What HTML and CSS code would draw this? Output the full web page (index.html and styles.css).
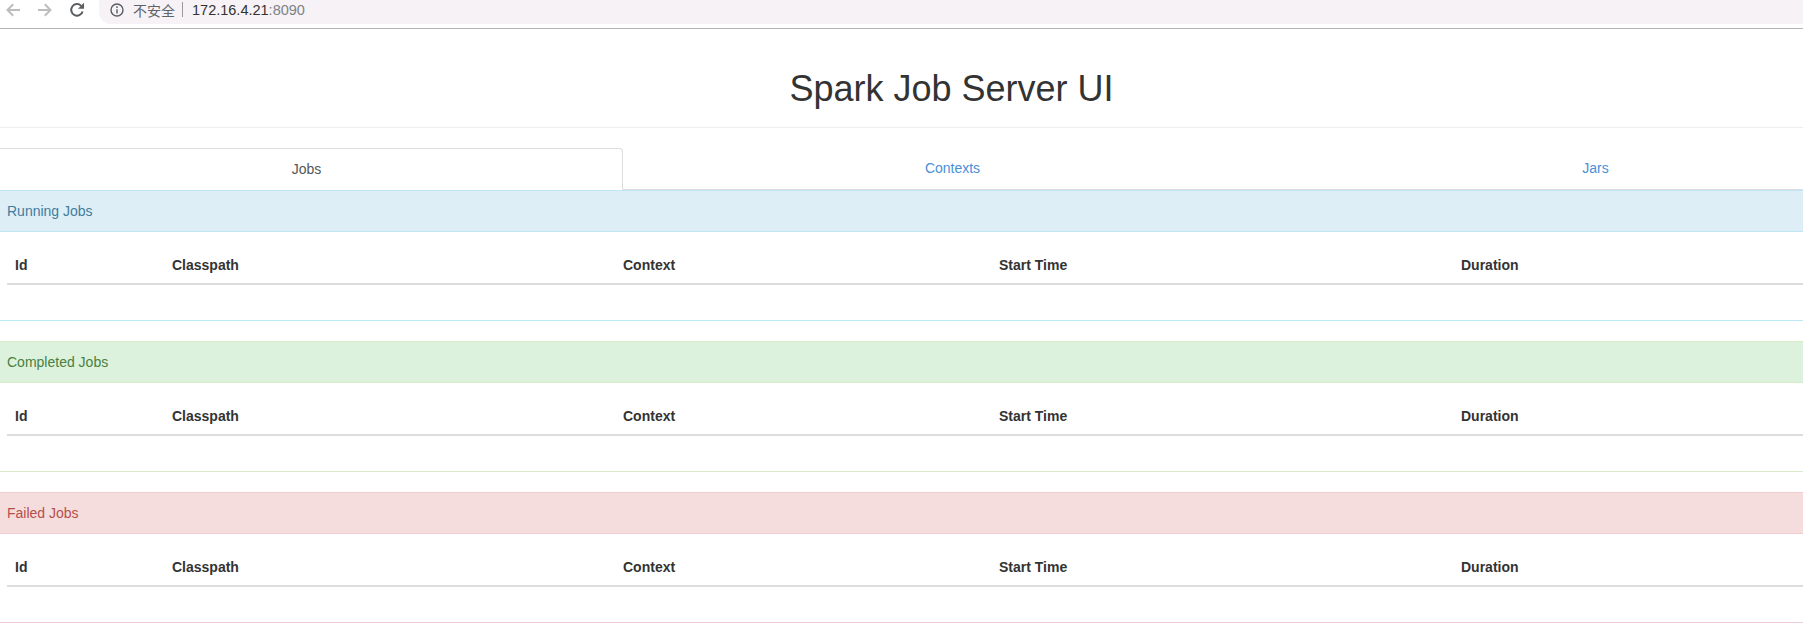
FILE: index.html
```html
<!DOCTYPE html>
<html lang="zh">
<head>
<meta charset="utf-8">
<title>Spark Job Server UI</title>
<link rel="stylesheet" href="styles.css">
</head>
<body>
<div class="toolbar">
  <div class="nav-icons">
    <svg class="icon back" viewBox="0 0 16 16"><path d="M15 8H2.5M8.2 2.3L2.5 8L8.2 13.7"/></svg>
    <svg class="icon forward" viewBox="0 0 16 16"><path d="M1 8H13.5M7.8 2.3L13.5 8L7.8 13.7"/></svg>
    <svg class="icon reload" viewBox="0 0 16 16"><path d="M13.6 9.4A5.8 5.8 0 1 1 12.2 3.9"/><path class="fill" d="M9 6.8H15V0.8Z"/></svg>
  </div>
  <div class="omnibox">
    <svg class="info" viewBox="0 0 14 14"><circle cx="7" cy="7" r="6"/><path d="M7 6.2V10.6M7 3.2V5"/></svg>
    <span class="insecure">不安全</span>
    <span class="sep"></span>
    <span class="host">172.16.4.21</span><span class="port">:8090</span>
  </div>
</div>
<div class="page">
  <h1 class="title">Spark Job Server UI</h1>
  <ul class="tabs">
    <li class="tab active">Jobs</li>
    <li class="tab">Contexts</li>
    <li class="tab">Jars</li>
  </ul>
  <section class="panel info-panel">
    <div class="panel-heading">Running Jobs</div>
    <div class="panel-body"><div class="row"><span>Id</span><span>Classpath</span><span>Context</span><span>Start Time</span><span>Duration</span></div></div>
  </section>
  <section class="panel success-panel">
    <div class="panel-heading">Completed Jobs</div>
    <div class="panel-body"><div class="row"><span>Id</span><span>Classpath</span><span>Context</span><span>Start Time</span><span>Duration</span></div></div>
  </section>
  <section class="panel danger-panel">
    <div class="panel-heading">Failed Jobs</div>
    <div class="panel-body"><div class="row"><span>Id</span><span>Classpath</span><span>Context</span><span>Start Time</span><span>Duration</span></div></div>
  </section>
</div>
</body>
</html>
```
FILE: styles.css
```css
html, body { margin: 0; padding: 0; overflow: hidden; background: #fff; }
body { height: 629px; font-family: "Liberation Sans", Arial, sans-serif; font-size: 14px; color: #333; }

.toolbar { height: 29px; box-sizing: border-box; border-bottom: 1px solid #b4b4b4; background: #fff; display: flex; align-items: flex-start; }
.nav-icons { display: flex; width: 99px; flex: none; padding: 2px 0 0 5px; box-sizing: border-box; gap: 16px; }
.icon { width: 16px; height: 16px; fill: none; stroke-width: 2; flex: none; }
.back, .forward { stroke: #bdbdbd; }
.reload { stroke: #5a5d61; }
.reload .fill { fill: #5a5d61; stroke: none; }
.omnibox { flex: 1; height: 24px; box-sizing: border-box; padding: 0 0 5px 11px; background: #f6f2f6; border-radius: 0 0 0 12px; display: flex; align-items: center; font-family: "Liberation Sans", "Noto Sans CJK SC", sans-serif; }
.info { width: 14px; height: 14px; fill: none; stroke: #5a5d61; stroke-width: 1.4; margin-right: 9px; flex: none; }
.insecure { font-size: 14px; color: #5f6368; }
.sep { width: 1px; height: 15px; background: #9a9a9a; margin: 0 9px 0 7px; }
.host { font-size: 14.5px; color: #333; }
.port { font-size: 14.5px; color: #7d8288; }

.page { width: 1903px; }
.title { margin: 0; height: 99px; box-sizing: border-box; border-bottom: 1px solid #eee; padding-top: 40px; text-align: center; font-size: 36px; font-weight: 400; line-height: 40px; color: #333; }
.tabs { list-style: none; margin: 20px -6px 0 -8px; padding: 0; display: grid; grid-template-columns: 631px 659px 1fr; height: 42px; box-sizing: border-box; border-bottom: 1px solid #ddd; }
.tab { line-height: 20px; padding: 10px 15px; text-align: center; color: #4a8fd8; font-size: 14px; height: 41px; box-sizing: border-box; }
.tab.active { color: #555; border: 1px solid #ddd; border-bottom-color: transparent; border-radius: 4px 4px 0 0; background: #fff; height: 42px; padding-right: 17px; }

.panel { height: 131px; box-sizing: border-box; margin-bottom: 20px; border-bottom: 1px solid; }
.panel-heading { height: 42px; box-sizing: border-box; border-top: 1px solid; border-bottom: 1px solid; padding: 10px 7px; line-height: 20px; }
.info-panel { border-color: #bce8f1; }
.info-panel .panel-heading { background: #ddeef7; color: #3f7d9c; border-color: #bfe6f2; }
.success-panel { border-color: #d9e9c9; }
.success-panel .panel-heading { background: #ddf2dd; color: #47803f; border-color: #d6ecc8; }
.danger-panel { border-color: #efcdd6; }
.danger-panel .panel-heading { background: #f6dddd; color: #b54f4c; border-color: #efcdd2; }

.panel-body { padding: 15px 0 0 7px; }
.row { display: grid; grid-template-columns: 157px 451px 376px 462px 1fr; height: 38px; box-sizing: border-box; border-bottom: 2px solid #ddd; padding-top: 8px; line-height: 20px; font-weight: 700; color: #333; }
.row span { padding-left: 8px; }
```
